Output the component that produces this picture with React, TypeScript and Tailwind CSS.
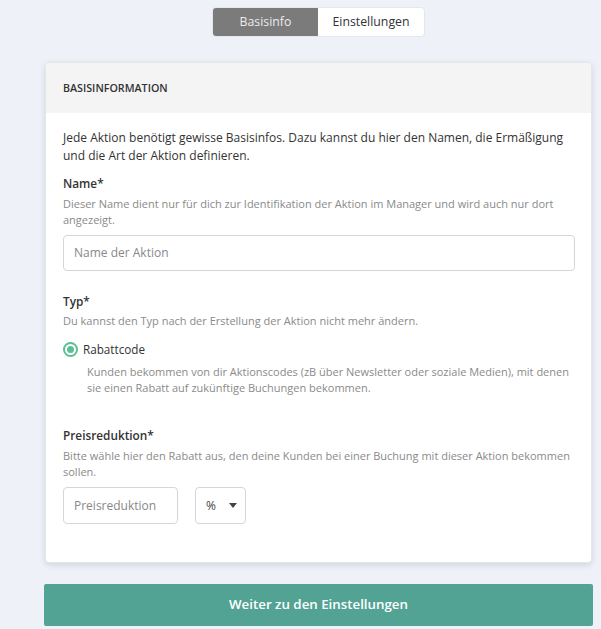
export default function App() {
  return (
    <div className="min-h-[629px] w-full bg-[#eef1f7] font-['Open_Sans',sans-serif] text-[#333]">
      <div className="flex justify-center pt-[7px] pl-[36px]">
        <div className="flex h-[30px] rounded-[4px] border border-[#e3e6ea] bg-white overflow-hidden text-[12.3px]">
          <div className="flex w-[105px] items-center justify-center bg-[#7b7b7b] text-[#ececec]">Basisinfo</div>
          <div className="flex w-[106px] items-center justify-center text-[#333]">Einstellungen</div>
        </div>
      </div>

      <div className="ml-[45px] mt-[25px] w-[547px] rounded-[4px] border border-[#e4e6ea] bg-white shadow-[0_2px_6px_rgba(0,0,0,0.12)] overflow-hidden">
        <div className="flex h-[50px] items-center bg-[#f4f4f4] px-[17px] text-[10.7px] font-semibold text-[#333]">
          BASISINFORMATION
        </div>
        <div className="px-[17px] pt-[16px] pb-[38px]">
          <p className="text-[12px] leading-[18px] text-[#333]">
            Jede Aktion benötigt gewisse Basisinfos. Dazu kannst du hier den Namen, die Ermäßigung und die Art der Aktion definieren.
          </p>

          <div className="mt-[9px] text-[11.8px] leading-[18px] font-semibold text-[#333]">Name*</div>
          <p className="mt-[4px] text-[11px] leading-[15.5px] text-[#8a8a8a]">
            Dieser Name dient nur für dich zur Identifikation der Aktion im Manager und wird auch nur dort angezeigt.
          </p>
          <div className="mt-[8px] flex h-[36px] w-[512px] items-center rounded-[4px] border border-[#d6d6d6] px-[10px] text-[12px] text-[#888]">
            Name der Aktion
          </div>

          <div className="mt-[21px] text-[11.8px] leading-[18px] font-semibold text-[#333]">Typ*</div>
          <p className="mt-[3px] text-[11px] leading-[16px] text-[#8a8a8a]">
            Du kannst den Typ nach der Erstellung der Aktion nicht mehr ändern.
          </p>
          <div className="mt-[11px] flex items-center gap-[5px]">
            <div className="flex h-[15px] w-[15px] items-center justify-center rounded-full border-[2px] border-[#5cbf94]">
              <div className="h-[7px] w-[7px] rounded-full bg-[#5cbf94]"></div>
            </div>
            <span className="text-[11.7px] leading-[18px] text-[#333]">Rabattcode</span>
          </div>
          <p className="mt-[6px] pl-[24px] text-[11px] leading-[16px] text-[#8a8a8a]">
            Kunden bekommen von dir Aktionscodes (zB über Newsletter oder soziale Medien), mit denen sie einen Rabatt auf zukünftige Buchungen bekommen.
          </p>

          <div className="mt-[30px] text-[11.8px] leading-[18px] font-semibold text-[#333]">Preisreduktion*</div>
          <p className="mt-[4px] text-[11px] leading-[15.5px] text-[#8a8a8a]">
            Bitte wähle hier den Rabatt aus, den deine Kunden bei einer Buchung mit dieser Aktion bekommen sollen.
          </p>
          <div className="mt-[8px] flex gap-[17px]">
            <div className="flex h-[37px] w-[115px] items-center rounded-[4px] border border-[#d6d6d6] px-[10px] text-[12px] text-[#888]">
              Preisreduktion
            </div>
            <div className="flex h-[37px] w-[51px] items-center justify-between rounded-[4px] border border-[#d6d6d6] pl-[10px] pr-[8px] text-[12px] text-[#444]">
              <span>%</span>
              <svg width="8" height="5" viewBox="0 0 8 5"><path d="M0 0h8L4 5z" fill="#444" /></svg>
            </div>
          </div>
        </div>
      </div>

      <div className="ml-[44px] mt-[21px] flex h-[42px] w-[549px] items-center justify-center rounded-[2px] bg-[#52a394] text-[13.3px] font-semibold text-white">
        Weiter zu den Einstellungen
      </div>
    </div>
  );
}
